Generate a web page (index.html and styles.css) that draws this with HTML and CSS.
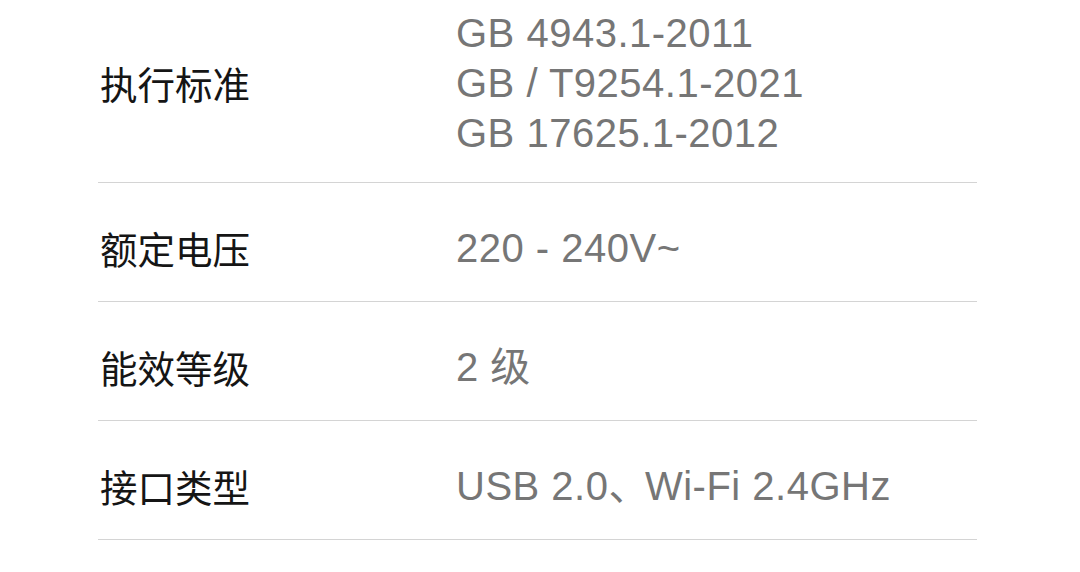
FILE: index.html
```html
<!DOCTYPE html>
<html lang="zh-CN">
<head>
    <meta charset="UTF-8">
    <meta name="viewport" content="width=device-width, initial-scale=1.0">
    <title>规格参数</title>
    <link rel="stylesheet" href="styles.css">
</head>
<body>
    <div id="specs">
        <div class="spec-row first">
            <div class="spec-label">执行标准</div>
            <div class="spec-value">
                <div>GB 4943.1-2011</div>
                <div>GB / T9254.1-2021</div>
                <div>GB 17625.1-2012</div>
            </div>
        </div>
        <div class="spec-row">
            <div class="spec-label">额定电压</div>
            <div class="spec-value">220 - 240V~</div>
        </div>
        <div class="spec-row">
            <div class="spec-label">能效等级</div>
            <div class="spec-value">2 级</div>
        </div>
        <div class="spec-row">
            <div class="spec-label">接口类型</div>
            <div class="spec-value">USB 2.0<span class="sep">、</span>Wi-Fi 2.4GHz</div>
        </div>
    </div>
</body>
</html>
```

FILE: styles.css
```css
body {
    margin: 0;
    padding: 0;
    background: #fff;
    font-family: "Liberation Sans", "Noto Sans CJK SC", sans-serif;
    overflow: hidden;
}
#specs {
    margin-left: 98px;
    width: 879px;
    padding-top: 8px;
}
.spec-row {
    display: flex;
    align-items: center;
    padding: 40px 0 28px;
    border-bottom: 1px solid #d4d4d4;
}
.spec-row.first {
    padding-top: 0;
    padding-bottom: 24px;
}
.spec-label {
    width: 358px;
    flex-shrink: 0;
    margin-left: 2px;
    font-family: "Noto Sans CJK SC", sans-serif;
    font-size: 37.5px;
    line-height: 50px;
    color: #151515;
}
.spec-label + .spec-value {
    margin-left: -2px;
}
.spec-value {
    font-size: 40px;
    line-height: 50px;
    letter-spacing: 0.5px;
    color: #767676;
}
.sep {
    margin-right: -4px;
}
```
